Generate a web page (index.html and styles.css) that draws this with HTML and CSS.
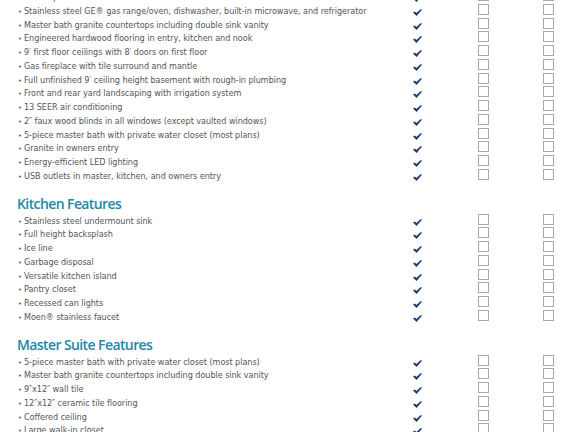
FILE: index.html
```html
<!DOCTYPE html>
<html>
<head>
<meta charset="utf-8">
<link rel="stylesheet" href="styles.css">
</head>
<body>
<div class="sheet">
  <section class="group first">
    <div class="row"><span class="item">Raised panel interior doors with brushed nickel hardware</span><span class="chk"><svg viewBox="0 0 9 7"><path d="M0 3.6 L1.9 2.4 L3.3 4 L7.9 0 L9 0.8 L3.5 7 Z"/></svg></span><span class="box"><i></i></span><span class="box"><i></i></span></div>
    <div class="row"><span class="item">Stainless steel GE® gas range/oven, dishwasher, built-in microwave, and refrigerator</span><span class="chk"><svg viewBox="0 0 9 7"><path d="M0 3.6 L1.9 2.4 L3.3 4 L7.9 0 L9 0.8 L3.5 7 Z"/></svg></span><span class="box"><i></i></span><span class="box"><i></i></span></div>
    <div class="row"><span class="item">Master bath granite countertops including double sink vanity</span><span class="chk"><svg viewBox="0 0 9 7"><path d="M0 3.6 L1.9 2.4 L3.3 4 L7.9 0 L9 0.8 L3.5 7 Z"/></svg></span><span class="box"><i></i></span><span class="box"><i></i></span></div>
    <div class="row"><span class="item">Engineered hardwood flooring in entry, kitchen and nook</span><span class="chk"><svg viewBox="0 0 9 7"><path d="M0 3.6 L1.9 2.4 L3.3 4 L7.9 0 L9 0.8 L3.5 7 Z"/></svg></span><span class="box"><i></i></span><span class="box"><i></i></span></div>
    <div class="row"><span class="item">9′ first floor ceilings with 8′ doors on first floor</span><span class="chk"><svg viewBox="0 0 9 7"><path d="M0 3.6 L1.9 2.4 L3.3 4 L7.9 0 L9 0.8 L3.5 7 Z"/></svg></span><span class="box"><i></i></span><span class="box"><i></i></span></div>
    <div class="row"><span class="item">Gas fireplace with tile surround and mantle</span><span class="chk"><svg viewBox="0 0 9 7"><path d="M0 3.6 L1.9 2.4 L3.3 4 L7.9 0 L9 0.8 L3.5 7 Z"/></svg></span><span class="box"><i></i></span><span class="box"><i></i></span></div>
    <div class="row"><span class="item">Full unfinished 9′ ceiling height basement with rough-in plumbing</span><span class="chk"><svg viewBox="0 0 9 7"><path d="M0 3.6 L1.9 2.4 L3.3 4 L7.9 0 L9 0.8 L3.5 7 Z"/></svg></span><span class="box"><i></i></span><span class="box"><i></i></span></div>
    <div class="row"><span class="item">Front and rear yard landscaping with irrigation system</span><span class="chk"><svg viewBox="0 0 9 7"><path d="M0 3.6 L1.9 2.4 L3.3 4 L7.9 0 L9 0.8 L3.5 7 Z"/></svg></span><span class="box"><i></i></span><span class="box"><i></i></span></div>
    <div class="row"><span class="item">13 SEER air conditioning</span><span class="chk"><svg viewBox="0 0 9 7"><path d="M0 3.6 L1.9 2.4 L3.3 4 L7.9 0 L9 0.8 L3.5 7 Z"/></svg></span><span class="box"><i></i></span><span class="box"><i></i></span></div>
    <div class="row"><span class="item">2″ faux wood blinds in all windows (except vaulted windows)</span><span class="chk"><svg viewBox="0 0 9 7"><path d="M0 3.6 L1.9 2.4 L3.3 4 L7.9 0 L9 0.8 L3.5 7 Z"/></svg></span><span class="box"><i></i></span><span class="box"><i></i></span></div>
    <div class="row"><span class="item">5-piece master bath with private water closet (most plans)</span><span class="chk"><svg viewBox="0 0 9 7"><path d="M0 3.6 L1.9 2.4 L3.3 4 L7.9 0 L9 0.8 L3.5 7 Z"/></svg></span><span class="box"><i></i></span><span class="box"><i></i></span></div>
    <div class="row"><span class="item">Granite in owners entry</span><span class="chk"><svg viewBox="0 0 9 7"><path d="M0 3.6 L1.9 2.4 L3.3 4 L7.9 0 L9 0.8 L3.5 7 Z"/></svg></span><span class="box"><i></i></span><span class="box"><i></i></span></div>
    <div class="row"><span class="item">Energy-efficient LED lighting</span><span class="chk"><svg viewBox="0 0 9 7"><path d="M0 3.6 L1.9 2.4 L3.3 4 L7.9 0 L9 0.8 L3.5 7 Z"/></svg></span><span class="box"><i></i></span><span class="box"><i></i></span></div>
    <div class="row"><span class="item">USB outlets in master, kitchen, and owners entry</span><span class="chk"><svg viewBox="0 0 9 7"><path d="M0 3.6 L1.9 2.4 L3.3 4 L7.9 0 L9 0.8 L3.5 7 Z"/></svg></span><span class="box"><i></i></span><span class="box"><i></i></span></div>
  </section>
  <section class="group">
    <h2>Kitchen Features</h2>
    <div class="row"><span class="item">Stainless steel undermount sink</span><span class="chk"><svg viewBox="0 0 9 7"><path d="M0 3.6 L1.9 2.4 L3.3 4 L7.9 0 L9 0.8 L3.5 7 Z"/></svg></span><span class="box"><i></i></span><span class="box"><i></i></span></div>
    <div class="row"><span class="item">Full height backsplash</span><span class="chk"><svg viewBox="0 0 9 7"><path d="M0 3.6 L1.9 2.4 L3.3 4 L7.9 0 L9 0.8 L3.5 7 Z"/></svg></span><span class="box"><i></i></span><span class="box"><i></i></span></div>
    <div class="row"><span class="item">Ice line</span><span class="chk"><svg viewBox="0 0 9 7"><path d="M0 3.6 L1.9 2.4 L3.3 4 L7.9 0 L9 0.8 L3.5 7 Z"/></svg></span><span class="box"><i></i></span><span class="box"><i></i></span></div>
    <div class="row"><span class="item">Garbage disposal</span><span class="chk"><svg viewBox="0 0 9 7"><path d="M0 3.6 L1.9 2.4 L3.3 4 L7.9 0 L9 0.8 L3.5 7 Z"/></svg></span><span class="box"><i></i></span><span class="box"><i></i></span></div>
    <div class="row"><span class="item">Versatile kitchen island</span><span class="chk"><svg viewBox="0 0 9 7"><path d="M0 3.6 L1.9 2.4 L3.3 4 L7.9 0 L9 0.8 L3.5 7 Z"/></svg></span><span class="box"><i></i></span><span class="box"><i></i></span></div>
    <div class="row"><span class="item">Pantry closet</span><span class="chk"><svg viewBox="0 0 9 7"><path d="M0 3.6 L1.9 2.4 L3.3 4 L7.9 0 L9 0.8 L3.5 7 Z"/></svg></span><span class="box"><i></i></span><span class="box"><i></i></span></div>
    <div class="row"><span class="item">Recessed can lights</span><span class="chk"><svg viewBox="0 0 9 7"><path d="M0 3.6 L1.9 2.4 L3.3 4 L7.9 0 L9 0.8 L3.5 7 Z"/></svg></span><span class="box"><i></i></span><span class="box"><i></i></span></div>
    <div class="row"><span class="item">Moen® stainless faucet</span><span class="chk"><svg viewBox="0 0 9 7"><path d="M0 3.6 L1.9 2.4 L3.3 4 L7.9 0 L9 0.8 L3.5 7 Z"/></svg></span><span class="box"><i></i></span><span class="box"><i></i></span></div>
  </section>
  <section class="group">
    <h2>Master Suite Features</h2>
    <div class="row"><span class="item">5-piece master bath with private water closet (most plans)</span><span class="chk"><svg viewBox="0 0 9 7"><path d="M0 3.6 L1.9 2.4 L3.3 4 L7.9 0 L9 0.8 L3.5 7 Z"/></svg></span><span class="box"><i></i></span><span class="box"><i></i></span></div>
    <div class="row"><span class="item">Master bath granite countertops including double sink vanity</span><span class="chk"><svg viewBox="0 0 9 7"><path d="M0 3.6 L1.9 2.4 L3.3 4 L7.9 0 L9 0.8 L3.5 7 Z"/></svg></span><span class="box"><i></i></span><span class="box"><i></i></span></div>
    <div class="row"><span class="item">9″x12″ wall tile</span><span class="chk"><svg viewBox="0 0 9 7"><path d="M0 3.6 L1.9 2.4 L3.3 4 L7.9 0 L9 0.8 L3.5 7 Z"/></svg></span><span class="box"><i></i></span><span class="box"><i></i></span></div>
    <div class="row"><span class="item">12″x12″ ceramic tile flooring</span><span class="chk"><svg viewBox="0 0 9 7"><path d="M0 3.6 L1.9 2.4 L3.3 4 L7.9 0 L9 0.8 L3.5 7 Z"/></svg></span><span class="box"><i></i></span><span class="box"><i></i></span></div>
    <div class="row"><span class="item">Coffered ceiling</span><span class="chk"><svg viewBox="0 0 9 7"><path d="M0 3.6 L1.9 2.4 L3.3 4 L7.9 0 L9 0.8 L3.5 7 Z"/></svg></span><span class="box"><i></i></span><span class="box"><i></i></span></div>
    <div class="row"><span class="item">Large walk-in closet</span><span class="chk"><svg viewBox="0 0 9 7"><path d="M0 3.6 L1.9 2.4 L3.3 4 L7.9 0 L9 0.8 L3.5 7 Z"/></svg></span><span class="box"><i></i></span><span class="box"><i></i></span></div>
  </section>
</div>
</body>
</html>
```

FILE: styles.css
```css
html, body {
  margin: 0;
  padding: 0;
  background: #ffffff;
}
body {
  width: 576px;
  height: 432px;
  overflow: hidden;
  font-family: "DejaVu Sans Condensed", "Liberation Sans", sans-serif;
  color: #555658;
}
.sheet {
  display: flex;
  flex-direction: column;
  margin-top: -9px;
}
.group h2 {
  margin: 12px 0 3px 0;
  padding-left: 17px;
  height: 16px;
  line-height: 16px;
  font-family: "Open Sans", "Liberation Sans", sans-serif;
  font-size: 14px;
  font-weight: 600;
  color: #1e88a8;
  letter-spacing: -0.6px;
}
.row {
  display: grid;
  grid-template-columns: 390px 55px 77px 53px;
  height: 13.75px;
  align-items: start;
}
.item {
  padding-left: 18px;
  font-size: 9px;
  line-height: 13.75px;
  letter-spacing: -0.05px;
  white-space: nowrap;
  overflow: hidden;
}
.item::before {
  content: "•";
  display: inline-block;
  width: 6px;
  font-size: 7px;
}
.chk {
  display: flex;
  justify-content: center;
  padding-top: 4px;
}
.chk svg {
  width: 9px;
  height: 7px;
  fill: #1d3d6e;
}
.box {
  display: flex;
  justify-content: center;
  margin-top: -1px;
}
.box i {
  display: block;
  width: 9px;
  height: 9px;
  border: 1px solid #a9a9a9;
}
```
